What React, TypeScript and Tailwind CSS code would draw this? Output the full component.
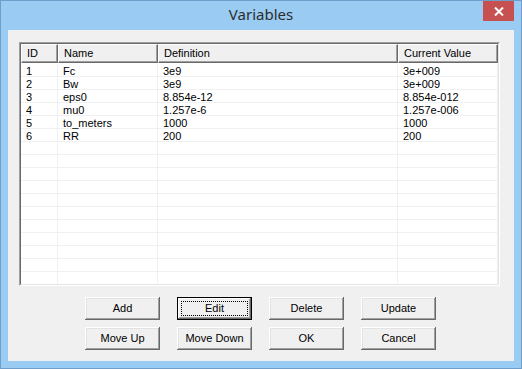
import React from "react";

const rows = [
  ["1", "Fc", "3e9", "3e+009"],
  ["2", "Bw", "3e9", "3e+009"],
  ["3", "eps0", "8.854e-12", "8.854e-012"],
  ["4", "mu0", "1.257e-6", "1.257e-006"],
  ["5", "to_meters", "1000", "1000"],
  ["6", "RR", "200", "200"],
];

const cols = ["w-[37px]", "w-[100px]", "w-[240px]", "flex-1"];
const heads = ["ID", "Name", "Definition", "Current Value"];

function Btn({ label, def }: { label: string; def?: boolean }) {
  if (def) {
    return (
      <div className="w-[75px] h-[23px] border border-black bg-[#f0f0f0] shadow-[inset_-1px_-1px_#696969,inset_1px_1px_#fff,inset_-2px_-2px_#a0a0a0] flex items-center justify-center p-[3px]">
        <div className="w-full h-full border border-dotted border-black flex items-center justify-center text-black">
          {label}
        </div>
      </div>
    );
  }
  return (
    <div className="w-[75px] h-[23px] bg-[#f0f0f0] shadow-[inset_-1px_-1px_#696969,inset_1px_1px_#fff,inset_-2px_-2px_#a0a0a0,inset_2px_2px_#e3e3e3] flex items-center justify-center text-black">
      {label}
    </div>
  );
}

export default function App() {
  const blank = Array.from({ length: 11 });
  return (
    <div className="w-[522px] h-[369px] bg-[#99cbf3] border border-[#6f9dcc] flex flex-col px-[7px] pb-[7px]" style={{ fontFamily: '"Liberation Sans", Arial, sans-serif' }}>
      <div className="h-[29px] relative flex items-center justify-center shrink-0">
        <span className="text-[15px] text-[#2d2d2d] pb-[3px]" style={{ fontFamily: '"Noto Sans", "Open Sans", sans-serif' }}>
          Variables
        </span>
        <div className="absolute right-0 top-0 w-[31px] h-[20px] bg-[#c75050] flex items-center justify-center">
          <svg width="10" height="9" viewBox="0 0 10 9">
            <path d="M1 0.5 L9 8.5 M9 0.5 L1 8.5" stroke="#fff" strokeWidth="2" />
          </svg>
        </div>
      </div>
      <div className="flex-1 bg-[#f0f0f0] flex flex-col pl-[11px] pt-[12px] text-[11px]">
        <div className="w-[481px] h-[244px] border-t border-l border-[#a0a0a0] border-r border-b border-r-white border-b-white">
          <div className="w-full h-full border-t border-l border-[#696969] border-r border-b border-r-[#e3e3e3] border-b-[#e3e3e3] bg-white flex flex-col overflow-hidden">
            <div className="flex h-[19px] shrink-0">
              {heads.map((h, i) => (
                <div key={h} className={`${cols[i]} h-full bg-[#f0f0f0] border-t border-l border-white border-r border-b border-r-[#696969] border-b-[#696969] shadow-[inset_-1px_-1px_#a0a0a0] flex items-center pl-[5px] text-black`}>
                  {h}
                </div>
              ))}
            </div>
            <div className="h-[1px] shrink-0" />
            {rows.map((r) => (
              <div key={r[0]} className="flex h-[13px] shrink-0 border-b border-[#f0f0f0]">
                {r.map((c, i) => (
                  <div key={i} className={`${cols[i]} h-full leading-[14px] pl-[5px] text-black border-r border-[#f0f0f0]`}>
                    {c}
                  </div>
                ))}
              </div>
            ))}
            {blank.map((_, k) => (
              <div key={k} className="flex h-[13px] shrink-0 border-b border-[#f0f0f0]">
                {cols.map((c, i) => (
                  <div key={i} className={`${c} h-full border-r border-[#f0f0f0]`} />
                ))}
              </div>
            ))}
          </div>
        </div>
        <div className="flex flex-col gap-[7px] pl-[66px] pt-[11px]">
          <div className="flex gap-[17px]">
            <Btn label="Add" />
            <Btn label="Edit" def />
            <Btn label="Delete" />
            <Btn label="Update" />
          </div>
          <div className="flex gap-[17px]">
            <Btn label="Move Up" />
            <Btn label="Move Down" />
            <Btn label="OK" />
            <Btn label="Cancel" />
          </div>
        </div>
      </div>
    </div>
  );
}
